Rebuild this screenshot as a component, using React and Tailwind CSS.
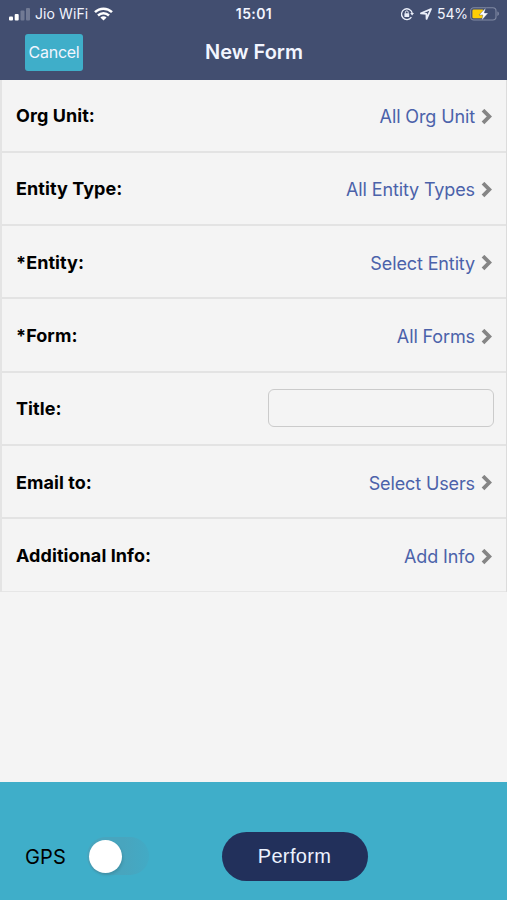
import React from "react";

const rows = [
  { label: "Org Unit:", value: "All Org Unit" },
  { label: "Entity Type:", value: "All Entity Types" },
  { label: "*Entity:", value: "Select Entity" },
  { label: "*Form:", value: "All Forms" },
  { label: "Title:", input: true },
  { label: "Email to:", value: "Select Users" },
  { label: "Additional Info:", value: "Add Info" },
];

function Signal() {
  return (
    <svg className="h-[14px] w-[22px] shrink-0" viewBox="0 0 22 14" fill="#fff">
      <rect x="0" y="9.5" width="4" height="4" rx="1" />
      <rect x="5.7" y="7" width="4" height="6.5" rx="1" />
      <rect x="11.5" y="3.5" width="4" height="10" rx="1" opacity=".25" />
      <rect x="17" y="1" width="4" height="12.5" rx="1" opacity=".25" />
    </svg>
  );
}

function Wifi() {
  return (
    <svg className="h-[14px] w-[19px] shrink-0" viewBox="0 0 19 14" fill="none" stroke="#fff" strokeWidth="2.5">
      <path d="M1 5.2C5.8.5 13.2.5 18 5.2" />
      <path d="M4 8.5c3.2-3 7.8-3 11 0" />
      <path d="M9.5 13.5 6.4 10.5c1.8-1.6 4.4-1.6 6.2 0z" fill="#fff" stroke="none" />
    </svg>
  );
}

function RotationLock() {
  return (
    <svg className="h-[14px] w-[14px] shrink-0" viewBox="0 0 14 14" fill="none" stroke="#e9edf8" strokeWidth="1.3">
      <path d="M11.4 10.2A5.4 5.4 0 1 1 12.2 6" />
      <path d="M10.2 6h3.8l-1.9 2.6z" fill="#e9edf8" stroke="none" />
      <rect x="4.4" y="6.3" width="4.8" height="3.6" rx=".5" fill="#e9edf8" stroke="none" />
      <path d="M5.4 6.5V5.3a1.4 1.4 0 0 1 2.8 0v1.2" strokeWidth="1" />
    </svg>
  );
}

function LocationArrow() {
  return (
    <svg className="h-[12px] w-[12px] shrink-0" viewBox="0 0 12 12" fill="none" stroke="#e9edf8" strokeWidth="1.8" strokeLinejoin="round">
      <path d="M11 1 1 5.4l5.4.4.2 5.1z" />
    </svg>
  );
}

function Battery() {
  return (
    <svg className="h-[14px] w-[30px] shrink-0" viewBox="0 0 30 14">
      <rect x=".6" y=".8" width="25.4" height="12.2" rx="3.2" fill="none" stroke="#8089a3" strokeWidth="1.1" />
      <path d="M27.4 4.6c2 .5 2 3.9 0 4.4z" fill="#8089a3" />
      <rect x="2.4" y="2.6" width="11.2" height="8.6" rx="1.3" fill="#fdce05" />
      <path d="M15.8 .8 9 8h3.9l-1.3 5.4L18.2 6h-3.9z" fill="#fff" stroke="#424e70" strokeWidth=".4" />
    </svg>
  );
}

function Chevron() {
  return (
    <svg className="h-[16px] w-[12px] shrink-0" viewBox="0 0 12 16" fill="none" stroke="#858585" strokeWidth="3.8">
      <path d="m2 1.2 6.3 6.3L2 13.8" />
    </svg>
  );
}

export default function App() {
  return (
    <main className="flex h-[900px] w-[507px] flex-col overflow-hidden bg-[#f4f4f4] font-['Inter',sans-serif] text-black">
      <header className="h-[79.6px] shrink-0 bg-[#424e70] text-[#f2f5ff]">
        <div className="grid h-[27px] grid-cols-[1fr_auto_1fr] items-center pr-[7px] pl-[9px] text-[14px] leading-none">
          <div className="flex items-center">
            <Signal />
            <span className="mr-[6px] ml-[4px] tracking-[0.1px]">Jio WiFi</span>
            <Wifi />
          </div>
          <span className="mr-px font-semibold tracking-[0.4px]">15:01</span>
          <div className="flex items-center justify-end">
            <RotationLock />
            <span className="mr-[5px] ml-[6px]"><LocationArrow /></span>
            <span className="mr-[2px] tracking-[-0.1px]">54%</span>
            <Battery />
          </div>
        </div>
        <div className="grid h-[50px] grid-cols-[1fr_auto_1fr] items-center px-[25px]">
          <button className="h-[37px] w-[58px] rounded-[3px] bg-[#3faec9] text-[16px] leading-none tracking-[-0.25px]">Cancel</button>
          <h1 className="ml-px text-[20px] leading-none font-semibold">New Form</h1>
        </div>
      </header>

      <section className="h-[512.9px] shrink-0 border-r border-l-2 border-r-[#dcdcdc] border-l-[#e4e4e4]">
        {rows.map((row) => (
          <div key={row.label} className="flex h-[73.27px] items-center border-b-2 border-[#e3e3e3] pr-[13px] pl-[14px] last:border-b last:border-[#e6e6e6]">
            <span className="pt-[2px] text-[18px] leading-none font-bold tracking-[0.07px]">{row.label}</span>
            {row.input ? (
              <input aria-label="Title" className="-mr-px ml-auto h-[38px] w-[226px] rounded-[6px] border-[1.5px] border-[#cbcbcb] bg-transparent px-3" />
            ) : (
              <button className="ml-auto flex items-center gap-[6px] pt-[3px] text-[18px] leading-none tracking-[-0.12px] text-[#4b62aa]">
                <span className="mt-px">{row.value}</span>
                <Chevron />
              </button>
            )}
          </div>
        ))}
      </section>

      <footer className="mt-auto flex h-[118.5px] shrink-0 items-center bg-[#3faec9] pt-[31px] pl-[25px]">
        <span className="w-[62px] pt-px text-[20px] leading-none tracking-[0.1px]">GPS</span>
        <button aria-label="GPS" className="flex h-[38px] w-[62px] items-center rounded-full bg-linear-to-r from-[#48a5be] from-60% to-[#42aac5] pl-[2px]">
          <span className="size-[33px] rounded-full bg-white shadow-[1px_2px_3px_rgba(0,0,0,0.12)]" />
        </button>
        <button className="ml-[73px] h-[49px] w-[146px] rounded-full bg-[#22305b] pr-px font-['Liberation_Sans',sans-serif] text-[20px] leading-none tracking-[0.35px] text-[#edf2ff]">
          Perform
        </button>
      </footer>
    </main>
  );
}
